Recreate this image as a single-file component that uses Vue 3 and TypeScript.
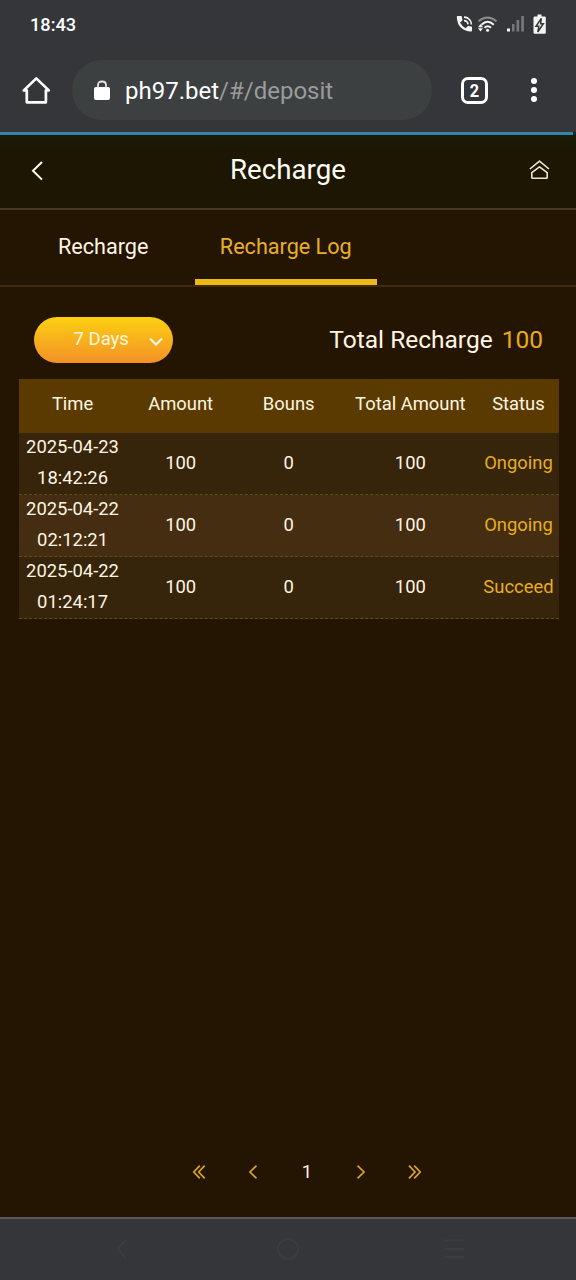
<script setup lang="ts">
interface LogRow {
  date: string
  time: string
  amount: number
  bonus: number
  total: number
  status: string
}

const columns: string[] = ['Time', 'Amount', 'Bouns', 'Total Amount', 'Status']

const rows: LogRow[] = [
  { date: '2025-04-23', time: '18:42:26', amount: 100, bonus: 0, total: 100, status: 'Ongoing' },
  { date: '2025-04-22', time: '02:12:21', amount: 100, bonus: 0, total: 100, status: 'Ongoing' },
  { date: '2025-04-22', time: '01:24:17', amount: 100, bonus: 0, total: 100, status: 'Succeed' },
]
</script>

<template>
  <div class="screen">
    <div class="browser">
      <div class="status-bar">
        <span class="clock">18:43</span>
        <svg class="status-icons" width="96" height="28" viewBox="0 0 96 28">
          <g fill="none" stroke="#f5f5f5" stroke-width="1.7">
            <path d="M14 7.2A7.2 7.2 0 0 1 21.400 14.400" />
            <path d="M14 10.600A4 4 0 0 1 18 14.400" />
          </g>
          <path
            fill="#f5f5f5"
            d="M7.600 6H11q.8 0 .9.800l.5 3q.1.600-.4 1.100L10 12.600Q12 16.600 15.600 18.200L17.600 16.200q.5-.4 1.100-.3l2.600.5q.7.200.7.900V20.600Q22 21.700 21 21.600Q7.400 20.600 6.800 7Q6.800 6 7.600 6Z"
          />
          <g fill="none" stroke-width="2">
            <path stroke="#8b8c8e" d="M28.500 11.300Q37.500 3.600 46.500 11.300" />
            <path stroke="#f5f5f5" d="M31.500 14.800Q37.500 8.800 43.800 14.800" />
            <path stroke="#f5f5f5" d="M34.500 17.700Q37.700 14.800 41 17.700" />
          </g>
          <circle cx="37.600" cy="20.300" r="1.500" fill="#f5f5f5" />
          <path fill="#f5f5f5" d="M30.500 14l2.500 3.200h-5zM30.500 21.500l2.500-3.200h-5z" />
          <rect x="57" y="18.500" width="3" height="3" fill="#f5f5f5" />
          <g fill="#77787b">
            <rect x="62" y="14" width="2.500" height="7.500" />
            <rect x="66.500" y="10" width="2.700" height="11.500" />
            <rect x="71.200" y="6" width="2.700" height="15.500" />
          </g>
          <path
            fill="#f5f5f5"
            d="M87.500 4.500h4V6.500h3q1.300 0 1.300 1.300V22.500q0 1.300-1.300 1.300H84.800q-1.300 0-1.300-1.300V7.800q0-1.300 1.300-1.300h2.700z"
          />
          <path
            fill="#f5f5f5"
            stroke="#35363a"
            stroke-width="1.500"
            d="M91.300 8.300L86 16.300H88.800L87.800 22L93.300 13.700H90.600z"
          />
        </svg>
      </div>
      <div class="toolbar">
        <svg class="home" width="30" height="30" viewBox="0 0 30 30">
          <path
            fill="none"
            stroke="#fff"
            stroke-width="2.700"
            stroke-linejoin="round"
            d="M2.800 15.400L15.300 3.400L27.800 15.400H24.900V27.300H5.800V15.400Z"
          />
        </svg>
        <div class="address">
          <svg class="lock" width="18" height="24" viewBox="0 0 18 24">
            <rect x="1" y="8" width="16" height="13" rx="2" fill="#fff" />
            <path d="M5 9V6Q5 2.500 9 2.500T13 6V9" fill="none" stroke="#e4e5e5" stroke-width="1.800" />
          </svg>
          <span class="url">ph97.bet<span class="path">/#/deposit</span></span>
        </div>
        <div class="tab-count"><span>2</span></div>
        <div class="menu-dots"><i></i><i></i><i></i></div>
      </div>
      <div class="progress"><div class="progress-fill"></div></div>
    </div>

    <header class="page-header">
      <svg class="back" width="16" height="24" viewBox="0 0 16 24">
        <path d="M13 3L4 11.800L13 20.600" fill="none" stroke="#fffdf0" stroke-width="2" />
      </svg>
      <h1>Recharge</h1>
      <svg class="lobby" width="22" height="22" viewBox="0 0 22 22">
        <g fill="none" stroke="#efe6cc" stroke-width="1.600" stroke-linejoin="round">
          <path d="M1.900 10L11.500 2.200L21 10" />
          <path d="M3.800 13.700L11.500 7.800L19.200 13.700V18.500Q19.200 19.300 18.400 19.300H4.600Q3.800 19.300 3.800 18.500Z" />
        </g>
      </svg>
    </header>

    <nav class="tabs">
      <a class="tab">Recharge</a>
      <a class="tab active">Recharge Log</a>
    </nav>

    <main class="content">
      <div class="filter-row">
        <button class="range">
          <span>7 Days</span>
          <svg width="16" height="12" viewBox="0 0 16 12">
            <path d="M2 2.500L8 8.500L14 2.500" fill="none" stroke="#fff8dc" stroke-width="2.300" />
          </svg>
        </button>
        <div class="summary">Total Recharge<strong>100</strong></div>
      </div>

      <div class="table">
        <div class="row head">
          <span v-for="c in columns" :key="c">{{ c }}</span>
        </div>
        <div v-for="r in rows" :key="r.date + r.time" class="row">
          <span class="stamp">{{ r.date }}<br />{{ r.time }}</span>
          <span>{{ r.amount }}</span>
          <span>{{ r.bonus }}</span>
          <span>{{ r.total }}</span>
          <span class="state">{{ r.status }}</span>
        </div>
      </div>
    </main>

    <div class="pager">
      <svg width="18" height="20" viewBox="0 0 18 20"><path d="M9.800 3.700L3.800 10L9.800 16.300M14.700 3.700L8.700 10L14.700 16.300" /></svg>
      <svg width="18" height="20" viewBox="0 0 18 20"><path d="M12.500 3.700L6 10L12.500 16.300" /></svg>
      <span>1</span>
      <svg width="18" height="20" viewBox="0 0 18 20"><path d="M5.500 3.700L12 10L5.500 16.300" /></svg>
      <svg width="18" height="20" viewBox="0 0 18 20"><path d="M3 3.700L9 10L3 16.300M8.200 3.700L14.200 10L8.200 16.300" /></svg>
    </div>

    <div class="system-nav">
      <svg width="24" height="26" viewBox="0 0 24 26"><path d="M16 3L8 13L16 23" /></svg>
      <svg width="24" height="26" viewBox="0 0 24 26"><circle cx="12" cy="13" r="10" /></svg>
      <svg width="24" height="26" viewBox="0 0 24 26"><path d="M2 4.500H22M2 13H22M2 21H22" /></svg>
    </div>
  </div>
</template>

<style>
body {
  background: #241402;
}
</style>

<style scoped>
.screen {
  width: 576px;
  height: 1280px;
  overflow: hidden;
  display: flex;
  flex-direction: column;
  background: #241402;
  color: #fff5e2;
  font-family: Roboto, "Liberation Sans", sans-serif;
}
.browser {
  height: 135px;
  background: #35363a;
  flex: none;
}
.status-bar {
  height: 50px;
  display: flex;
  align-items: center;
  justify-content: space-between;
  padding: 0 30px 2px;
  box-sizing: border-box;
}
.clock {
  font-size: 18.200px;
  font-weight: 500;
  color: #fff;
}
.status-icons {
  margin: 0 0 0 auto;
}
.toolbar {
  height: 82px;
  display: flex;
  align-items: flex-start;
  padding: 10px 0 0 21px;
  box-sizing: border-box;
}
.home {
  margin: 15px 21px 0 0;
}
.address {
  width: 360px;
  height: 60px;
  border-radius: 30px;
  background: #3d4041;
  display: flex;
  align-items: center;
  box-sizing: border-box;
  padding-left: 21px;
}
.lock {
  margin-top: 2px;
}
.url {
  font-size: 24px;
  margin-left: 14px;
  color: #fff;
  line-height: 60px;
  padding-top: 2px;
}
.path {
  color: #999b9c;
}
.tab-count {
  width: 27px;
  height: 27px;
  box-sizing: border-box;
  border: 3px solid #fff;
  border-radius: 7px;
  margin: 17px 0 0 29px;
  color: #fff;
  font-size: 19px;
  font-weight: 700;
  line-height: 21px;
  text-align: center;
}
.tab-count span {
  display: inline-block;
  transform: scaleX(0.86);
}
.menu-dots {
  margin: 18px 0 0 43px;
  display: flex;
  flex-direction: column;
  gap: 3px;
}
.menu-dots i {
  width: 6px;
  height: 6px;
  border-radius: 50%;
  background: #fff;
}
.progress {
  height: 3px;
  background: #14262a;
}
.progress-fill {
  width: 573px;
  height: 3px;
  background: #3584ae;
}
.page-header {
  height: 75px;
  box-sizing: border-box;
  border-bottom: 2px solid #463722;
  background: linear-gradient(#1a1c06, #1c1602 16px);
  display: grid;
  grid-template-columns: 72px 1fr 72px;
  align-items: center;
}
.back {
  margin: 0 0 2px 29px;
}
h1 {
  margin: 0;
  padding-bottom: 4px;
  text-align: center;
  font-size: 27.700px;
  line-height: 34px;
  font-weight: 400;
  color: #fffef5;
}
.lobby {
  margin: 0 0 3px 24px;
}
.tabs {
  height: 77px;
  box-sizing: border-box;
  border-bottom: 2px solid #402a0e;
  display: flex;
  padding-left: 12px;
}
.tab {
  width: 182.500px;
  height: 75px;
  box-sizing: border-box;
  text-align: center;
  font-size: 21.600px;
  line-height: 73px;
  border-bottom: 6px solid transparent;
}
.tab.active {
  color: #e8b027;
  border-bottom-color: #edb916;
}
.content {
  flex: 1;
  padding: 30px 17px 0 18.500px;
}
.filter-row {
  height: 61.500px;
  display: flex;
  justify-content: space-between;
  align-items: flex-start;
  padding: 0 16px 0 15px;
}
.range {
  width: 139px;
  height: 46px;
  border: 0;
  border-radius: 23px;
  padding: 0 9px 2px 40px;
  background: linear-gradient(#fcd011, #f39127);
  color: #fff8dc;
  font: 18.500px Roboto, "Liberation Sans", sans-serif;
  display: flex;
  align-items: center;
  justify-content: space-between;
}
.range svg {
  margin-top: 6px;
}
.summary {
  font-size: 24.500px;
  line-height: 46px;
}
.summary strong {
  font-weight: 400;
  color: #e9ab14;
  margin-left: 9px;
}
.table {
  font-size: 18.400px;
  line-height: 30.500px;
}
.row {
  height: 62px;
  box-sizing: border-box;
  display: grid;
  grid-template-columns: 20% 20% 20% 25% 15%;
  align-items: center;
  text-align: center;
  white-space: nowrap;
  background: #36240b;
  border-bottom: 1px dashed #644a16;
  padding-top: 1px;
}
.row:nth-child(odd) {
  background: #442d10;
}
.row.head {
  height: 54px;
  background: #5b3a00;
  border: 0;
  padding: 0 0 2px;
}
.stamp {
  margin-top: -2px;
}
.state {
  color: #e8ae1d;
}
.pager {
  display: flex;
  align-items: center;
  justify-content: center;
  gap: 36px;
  height: 30px;
  margin: 0 -1px 30px 38px;
  width: 538px;
  font-size: 18.500px;
}
.pager span {
  width: 18px;
  text-align: center;
}
.pager path {
  fill: none;
  stroke: #d9a429;
  stroke-width: 1.700;
}
.system-nav {
  height: 63px;
  box-sizing: border-box;
  flex: none;
  background: #35363a;
  border-top: 2px solid #595657;
  display: flex;
  justify-content: space-between;
  align-items: center;
  padding: 0 110px 2px;
}
.system-nav path,
.system-nav circle {
  fill: none;
  stroke: #3b3c40;
  stroke-width: 2;
}
</style>
